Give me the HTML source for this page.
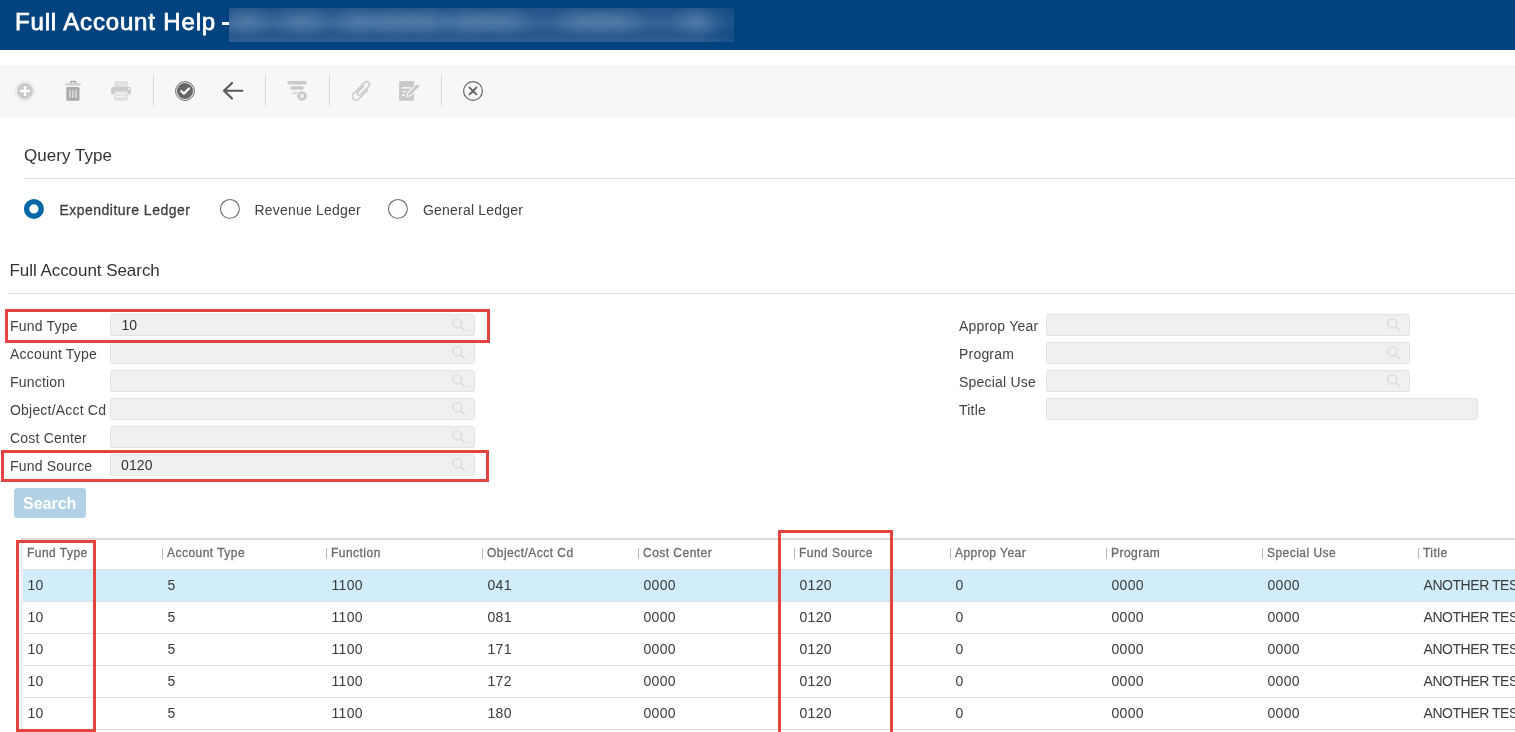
<!DOCTYPE html>
<html><head><meta charset="utf-8">
<style>
html,body{margin:0;padding:0;width:1515px;height:732px;overflow:hidden;background:#fff;position:relative;font-family:"Liberation Sans",sans-serif;}
.a{position:absolute;white-space:nowrap;line-height:1;}
#hdr{position:absolute;left:0;top:0;width:1515px;height:50px;background:#00437f;}
#blur{position:absolute;left:229px;top:8px;width:505px;height:34px;background-color:#2b5b8f;background-image:linear-gradient(to right,rgba(0,67,127,0) 93%,rgba(0,67,127,.5) 100%),radial-gradient(ellipse 30px 17px at 18px 14px,rgba(120,155,190,.42),rgba(120,155,190,0)),radial-gradient(ellipse 35px 17px at 73px 14px,rgba(120,155,190,.42),rgba(120,155,190,0)),radial-gradient(ellipse 35px 17px at 131px 14px,rgba(120,155,190,.42),rgba(120,155,190,0)),radial-gradient(ellipse 30px 17px at 167px 14px,rgba(120,155,190,.42),rgba(120,155,190,0)),radial-gradient(ellipse 30px 17px at 198px 14px,rgba(120,155,190,.42),rgba(120,155,190,0)),radial-gradient(ellipse 30px 17px at 239px 14px,rgba(120,155,190,.42),rgba(120,155,190,0)),radial-gradient(ellipse 35px 17px at 273px 14px,rgba(120,155,190,.42),rgba(120,155,190,0)),radial-gradient(ellipse 35px 17px at 354px 14px,rgba(120,155,190,.42),rgba(120,155,190,0)),radial-gradient(ellipse 35px 17px at 388px 14px,rgba(120,155,190,.42),rgba(120,155,190,0)),radial-gradient(ellipse 30px 17px at 469px 14px,rgba(120,155,190,.42),rgba(120,155,190,0)),linear-gradient(to bottom,rgba(0,50,110,.2) 0%,rgba(90,130,175,.2) 45%,rgba(0,50,110,.12) 78%,rgba(90,130,175,.12) 100%);}
#tb{position:absolute;left:0;top:65px;width:1515px;height:52px;background:#f7f7f7;}
.sep{position:absolute;top:74px;width:1px;height:32px;background:#d9d9d9;}
.hl{position:absolute;height:1px;background:#dedede;}
.lbl{font-size:14px;color:#424242;letter-spacing:0.2px;}
.inp{position:absolute;height:20px;background:#f0f0f0;border:1px solid #e2e2e2;border-radius:3px;box-sizing:content-box;}
.red{position:absolute;border:3px solid #e4443f;box-sizing:border-box;}
.th{font-size:12px;color:#6a6a6a;-webkit-text-stroke:0.3px #6a6a6a;letter-spacing:0.47px;}
.td{font-size:14px;color:#3a3a3a;letter-spacing:0.3px;}
.csep{position:absolute;top:548px;width:1px;height:11px;background:#bbb;}
.row{position:absolute;left:23px;width:1492px;height:31px;border-bottom:1px solid #dedede;}
</style></head><body><div id="wrap" style="position:absolute;left:0;top:0;width:1515px;height:732px;will-change:transform;">
<div id="hdr"></div>
<div class="a" style="left:15px;top:10.4px;font-size:24px;color:#fff;-webkit-text-stroke:0.75px #fff;letter-spacing:0.84px">Full Account Help</div><div style="position:absolute;left:222px;top:22.2px;width:7px;height:2.6px;background:#fff"></div>
<div id="blur"></div>

<div id="tb"></div>
<svg class="a" style="left:0;top:65px" width="520" height="51" viewBox="0 65 520 51">
 <!-- plus circle -->
 <circle cx="25" cy="91" r="9.5" fill="none" stroke="#e2e2e2" stroke-width="1"/>
 <circle cx="25" cy="91" r="8" fill="#c9c9c9"/>
 <rect x="20" y="89.75" width="10" height="2.5" fill="#fff"/>
 <rect x="23.75" y="86" width="2.5" height="10" fill="#fff"/>
 <!-- trash -->
 <rect x="71" y="81.5" width="4.5" height="3" rx=".6" fill="none" stroke="#aaa" stroke-width="1.6"/>
 <rect x="65.2" y="83.2" width="15.5" height="2.4" fill="#d2d2d2"/>
 <rect x="66.4" y="87" width="13.1" height="13.8" rx="1.3" fill="#aaa"/>
 <rect x="68.9" y="89.9" width="2" height="8" fill="#d2d2d2"/>
 <rect x="71.9" y="89.9" width="2" height="8" fill="#d2d2d2"/>
 <rect x="75" y="89.9" width="2" height="8" fill="#d2d2d2"/>
 <!-- printer -->
 <rect x="114.2" y="81.1" width="13.7" height="7" rx="1.5" fill="#e0e0e0"/>
 <rect x="111.1" y="86.9" width="19.9" height="7.7" rx="1.5" fill="#cbcbcb"/>
 <rect x="128" y="88" width="2" height="1.9" fill="#efefef"/>
 <rect x="114" y="91" width="14" height="9.8" rx="1.3" fill="#e0e0e0"/>
 <rect x="116" y="93" width="10" height="1.2" fill="#f6f6f6"/>
 <rect x="116" y="95.9" width="10" height="1.2" fill="#f6f6f6"/>
 <!-- check circle -->
 <circle cx="185" cy="91" r="9.4" fill="none" stroke="#666" stroke-width="1"/>
 <circle cx="185" cy="91" r="8" fill="#666"/>
 <path d="M181.3 91.2 L184 93.6 L189 88.4" fill="none" stroke="#fff" stroke-width="2.2" stroke-linecap="round" stroke-linejoin="round"/>
 <!-- back arrow -->
 <path d="M232 83 L224 90.75 L232 98.5 M224.2 90.75 L242.4 90.75" fill="none" stroke="#5a5a5a" stroke-width="2.2" stroke-linecap="round" stroke-linejoin="round"/>
 <!-- filter clear -->
 <path d="M288.9 82.85 L305 82.85 M292 87.95 L302.1 87.95" stroke="#c9c9c9" stroke-width="3.5" stroke-linecap="round"/>
 <path d="M293.3 93.3 L296.6 92.6" stroke="#d8d8d8" stroke-width="2.2" stroke-linecap="round"/>
 <circle cx="302" cy="96" r="4.8" fill="#c9c9c9"/>
 <path d="M300.2 94.2 L303.8 97.8 M303.8 94.2 L300.2 97.8" stroke="#f6f6f6" stroke-width="1.3"/>
 <!-- paperclip -->
 <g transform="translate(361.4,91.1) rotate(45) scale(0.94)" fill="none" stroke="#c9c9c9" stroke-width="1.65" stroke-linecap="round">
  <path d="M-2 -5.5 L-2 3.5 A2 2 0 0 0 2 3.5 L2 -9 A3 3 0 0 0 -4 -9 L-4 8 A4 4 0 0 0 4 8 L4 -5.4"/>
 </g>
 <!-- edit doc -->
 <rect x="399.1" y="81.1" width="15" height="19.7" fill="#c9c9c9"/>
 <rect x="402" y="87" width="8.8" height="1.7" fill="#f2f2f2"/>
 <rect x="402" y="91" width="4.7" height="1.2" fill="#f2f2f2"/>
 <rect x="402" y="94" width="3" height="1.9" fill="#f2f2f2"/>
 <path d="M407 96.5 L408 92.5 L417.2 83.3 L420.2 86.3 L411 95.5 Z" fill="#c9c9c9" stroke="#f6f6f6" stroke-width="1.2" stroke-linejoin="round"/>
 <!-- close circle -->
 <circle cx="473" cy="91" r="9.4" fill="none" stroke="#666" stroke-width="1.2"/>
 <path d="M469.6 87.6 L476.4 94.4 M476.4 87.6 L469.6 94.4" stroke="#666" stroke-width="2" stroke-linecap="round"/>
</svg>
<div class="sep" style="left:153px"></div>
<div class="sep" style="left:265px"></div>
<div class="sep" style="left:329px"></div>
<div class="sep" style="left:441px"></div>

<!-- Query type -->
<div class="a" style="left:24px;top:146.6px;font-size:17px;color:#333;letter-spacing:0.05px">Query Type</div>
<div class="hl" style="left:24px;top:178px;width:1491px"></div>
<svg class="a" style="left:0;top:190px" width="420" height="40" viewBox="0 190 420 40"><circle cx="33.9" cy="208.9" r="7.3" fill="none" stroke="#0068a6" stroke-width="5.4"/><circle cx="229.9" cy="208.9" r="9.4" fill="none" stroke="#6a6a6a" stroke-width="1.1"/><circle cx="397.9" cy="208.9" r="9.4" fill="none" stroke="#6a6a6a" stroke-width="1.1"/></svg>
<div class="a lbl" style="left:59.5px;top:203.2px;-webkit-text-stroke:0.28px #333;letter-spacing:0.48px">Expenditure Ledger</div>

<div class="a lbl" style="left:254.5px;top:203.2px;letter-spacing:0.2px">Revenue Ledger</div>

<div class="a lbl" style="left:423px;top:203.2px;letter-spacing:0.2px">General Ledger</div>

<!-- Full account search -->
<div class="a" style="left:9.5px;top:261.6px;font-size:17px;color:#333;letter-spacing:-0.05px">Full Account Search</div>
<div class="hl" style="left:9px;top:293px;width:1506px"></div>

<div class="a lbl" style="left:10px;top:318.8px">Fund Type</div>
<div class="a lbl" style="left:10px;top:346.8px">Account Type</div>
<div class="a lbl" style="left:10px;top:374.8px">Function</div>
<div class="a lbl" style="left:10px;top:402.8px">Object/Acct Cd</div>
<div class="a lbl" style="left:10px;top:430.8px">Cost Center</div>
<div class="a lbl" style="left:10px;top:458.8px">Fund Source</div>

<div class="inp" style="left:110px;top:314px;width:363px"></div>
<div class="inp" style="left:110px;top:342px;width:363px"></div>
<div class="inp" style="left:110px;top:370px;width:363px"></div>
<div class="inp" style="left:110px;top:398px;width:363px"></div>
<div class="inp" style="left:110px;top:426px;width:363px"></div>
<div class="inp" style="left:110px;top:454px;width:363px"></div>
<div class="a lbl" style="left:121.5px;top:318.2px;letter-spacing:0;color:#333">10</div>
<div class="a lbl" style="left:121px;top:458.2px;letter-spacing:0.1px;color:#333">0120</div>

<div class="a lbl" style="left:959px;top:318.8px">Approp Year</div>
<div class="a lbl" style="left:959px;top:346.8px">Program</div>
<div class="a lbl" style="left:959px;top:374.8px">Special Use</div>
<div class="a lbl" style="left:959px;top:402.8px">Title</div>
<div class="inp" style="left:1046px;top:314px;width:362px"></div>
<div class="inp" style="left:1046px;top:342px;width:362px"></div>
<div class="inp" style="left:1046px;top:370px;width:362px"></div>
<div class="inp" style="left:1046px;top:398px;width:430px"></div>

<svg class="a" style="left:0;top:300px" width="1515" height="190" viewBox="0 300 1515 190">
 <g fill="none" stroke="#d6d6d6" stroke-width="1.1">
  <g id="mg"><circle cx="457.3" cy="323.4" r="4.6"/><path d="M460.6 326.7 L465 331.1"/></g>
  <use href="#mg" y="28"/><use href="#mg" y="56"/><use href="#mg" y="84"/><use href="#mg" y="112"/><use href="#mg" y="140"/>
  <use href="#mg" x="935" y="0"/><use href="#mg" x="935" y="28"/><use href="#mg" x="935" y="56"/>
 </g>
</svg>

<div class="red" style="left:5px;top:309px;width:485px;height:34px"></div>
<div class="red" style="left:1px;top:450px;width:488px;height:32px"></div>

<div style="position:absolute;left:14px;top:488px;width:72px;height:30px;border-radius:3px;background:#b3d1e6;"></div>
<div class="a" style="left:23px;top:495.5px;font-size:16px;font-weight:bold;color:#fff">Search</div>

<!-- table -->
<div style="position:absolute;left:21px;top:538px;width:1494px;height:2px;background:#dcdcdc"></div>
<div style="position:absolute;left:21px;top:540px;width:2px;height:192px;background:linear-gradient(to right,#e6e6e6,#f8f8f8)"></div>
<div class="hl" style="left:23px;top:569px;width:1492px"></div>
<div class="csep" style="left:162px"></div><div class="csep" style="left:326px"></div><div class="csep" style="left:482px"></div>
<div class="csep" style="left:638px"></div><div class="csep" style="left:794px"></div><div class="csep" style="left:950px"></div>
<div class="csep" style="left:1106px"></div><div class="csep" style="left:1262px"></div><div class="csep" style="left:1418px"></div>
<div class="a th" style="left:27px;top:546.6px">Fund Type</div>
<div class="a th" style="left:167px;top:546.6px">Account Type</div>
<div class="a th" style="left:331px;top:546.6px">Function</div>
<div class="a th" style="left:487px;top:546.6px">Object/Acct Cd</div>
<div class="a th" style="left:643px;top:546.6px">Cost Center</div>
<div class="a th" style="left:799px;top:546.6px">Fund Source</div>
<div class="a th" style="left:955px;top:546.6px">Approp Year</div>
<div class="a th" style="left:1111px;top:546.6px">Program</div>
<div class="a th" style="left:1267px;top:546.6px">Special Use</div>
<div class="a th" style="left:1423px;top:546.6px">Title</div>

<!--rows-->
<div class="row" style="top:570px;background:#d1ecfb;"></div>
<div class="a td" style="left:27.5px;top:578.0px">10</div>
<div class="a td" style="left:167.5px;top:578.0px">5</div>
<div class="a td" style="left:331.5px;top:578.0px">1100</div>
<div class="a td" style="left:487.5px;top:578.0px">041</div>
<div class="a td" style="left:643.5px;top:578.0px">0000</div>
<div class="a td" style="left:799.5px;top:578.0px">0120</div>
<div class="a td" style="left:955.5px;top:578.0px">0</div>
<div class="a td" style="left:1111.5px;top:578.0px">0000</div>
<div class="a td" style="left:1267.5px;top:578.0px">0000</div>
<div class="a td" style="left:1423.5px;top:578.0px;letter-spacing:-0.45px">ANOTHER TEST</div>
<div class="row" style="top:602px;"></div>
<div class="a td" style="left:27.5px;top:610.0px">10</div>
<div class="a td" style="left:167.5px;top:610.0px">5</div>
<div class="a td" style="left:331.5px;top:610.0px">1100</div>
<div class="a td" style="left:487.5px;top:610.0px">081</div>
<div class="a td" style="left:643.5px;top:610.0px">0000</div>
<div class="a td" style="left:799.5px;top:610.0px">0120</div>
<div class="a td" style="left:955.5px;top:610.0px">0</div>
<div class="a td" style="left:1111.5px;top:610.0px">0000</div>
<div class="a td" style="left:1267.5px;top:610.0px">0000</div>
<div class="a td" style="left:1423.5px;top:610.0px;letter-spacing:-0.45px">ANOTHER TEST</div>
<div class="row" style="top:634px;"></div>
<div class="a td" style="left:27.5px;top:642.0px">10</div>
<div class="a td" style="left:167.5px;top:642.0px">5</div>
<div class="a td" style="left:331.5px;top:642.0px">1100</div>
<div class="a td" style="left:487.5px;top:642.0px">171</div>
<div class="a td" style="left:643.5px;top:642.0px">0000</div>
<div class="a td" style="left:799.5px;top:642.0px">0120</div>
<div class="a td" style="left:955.5px;top:642.0px">0</div>
<div class="a td" style="left:1111.5px;top:642.0px">0000</div>
<div class="a td" style="left:1267.5px;top:642.0px">0000</div>
<div class="a td" style="left:1423.5px;top:642.0px;letter-spacing:-0.45px">ANOTHER TEST</div>
<div class="row" style="top:666px;"></div>
<div class="a td" style="left:27.5px;top:674.0px">10</div>
<div class="a td" style="left:167.5px;top:674.0px">5</div>
<div class="a td" style="left:331.5px;top:674.0px">1100</div>
<div class="a td" style="left:487.5px;top:674.0px">172</div>
<div class="a td" style="left:643.5px;top:674.0px">0000</div>
<div class="a td" style="left:799.5px;top:674.0px">0120</div>
<div class="a td" style="left:955.5px;top:674.0px">0</div>
<div class="a td" style="left:1111.5px;top:674.0px">0000</div>
<div class="a td" style="left:1267.5px;top:674.0px">0000</div>
<div class="a td" style="left:1423.5px;top:674.0px;letter-spacing:-0.45px">ANOTHER TEST</div>
<div class="row" style="top:698px;"></div>
<div class="a td" style="left:27.5px;top:706.0px">10</div>
<div class="a td" style="left:167.5px;top:706.0px">5</div>
<div class="a td" style="left:331.5px;top:706.0px">1100</div>
<div class="a td" style="left:487.5px;top:706.0px">180</div>
<div class="a td" style="left:643.5px;top:706.0px">0000</div>
<div class="a td" style="left:799.5px;top:706.0px">0120</div>
<div class="a td" style="left:955.5px;top:706.0px">0</div>
<div class="a td" style="left:1111.5px;top:706.0px">0000</div>
<div class="a td" style="left:1267.5px;top:706.0px">0000</div>
<div class="a td" style="left:1423.5px;top:706.0px;letter-spacing:-0.45px">ANOTHER TEST</div>
<!--/rows-->
<div class="red" style="left:16px;top:540px;width:80px;height:192px"></div>
<div class="red" style="left:778px;top:530px;width:115px;height:210px"></div>
</div></body></html>
